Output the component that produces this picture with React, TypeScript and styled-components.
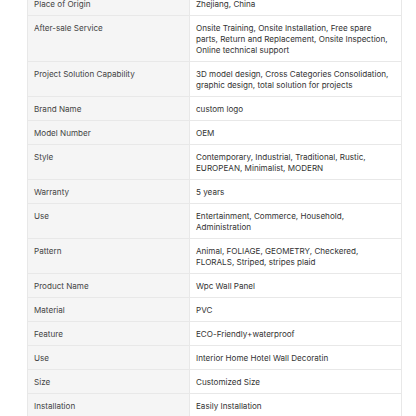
import React from "react";
import styled, { createGlobalStyle } from "styled-components";

const Global = createGlobalStyle`
  html, body { margin: 0; padding: 0; background: #ffffff; }
  body { font-family: Inter, "Noto Sans", sans-serif; overflow: hidden; }
`;

const Page = styled.div`
  padding-left: 27px;
  margin-top: -8px;
`;

const Table = styled.div`
  width: 375px;
  display: grid;
  grid-template-columns: 162px 1fr;
  border-left: 1px solid #e8e8e8;
  border-right: 1px solid #e8e8e8;
  box-sizing: border-box;
`;

const Label = styled.div`
  background: #f5f5f5;
  color: #444444;
  font-size: 8.1px;
  line-height: 11px;
  padding: 7px 6px 5px;
  border-bottom: 1px solid #e8e8e8;
  border-right: 1px solid #e8e8e8;
`;

const Value = styled.div`
  background: #ffffff;
  color: #333333;
  font-size: 8.1px;
  line-height: 11px;
  padding: 7px 6px 5px;
  border-bottom: 1px solid #e8e8e8;
`;

const rows: [string, string][] = [
  ["Place of Origin", "Zhejiang, China"],
  [
    "After-sale Service",
    "Onsite Training, Onsite Installation, Free spare parts, Return and Replacement, Onsite Inspection, Online technical support",
  ],
  [
    "Project Solution Capability",
    "3D model design, Cross Categories Consolidation, graphic design, total solution for projects",
  ],
  ["Brand Name", "custom logo"],
  ["Model Number", "OEM"],
  ["Style", "Contemporary, Industrial, Traditional, Rustic, EUROPEAN, Minimalist, MODERN"],
  ["Warranty", "5 years"],
  ["Use", "Entertainment, Commerce, Household, Administration"],
  ["Pattern", "Animal, FOLIAGE, GEOMETRY, Checkered, FLORALS, Striped, stripes plaid"],
  ["Product Name", "Wpc Wall Panel"],
  ["Material", "PVC"],
  ["Feature", "ECO-Friendly+waterproof"],
  ["Use", "Interior Home Hotel Wall Decoratin"],
  ["Size", "Customized Size"],
  ["Installation", "Easily Installation"],
];

export default function App() {
  return (
    <>
      <Global />
      <Page>
        <Table>
          {rows.map(([k, v], i) => (
            <React.Fragment key={i}>
              <Label>{k}</Label>
              <Value>{v}</Value>
            </React.Fragment>
          ))}
        </Table>
      </Page>
    </>
  );
}
